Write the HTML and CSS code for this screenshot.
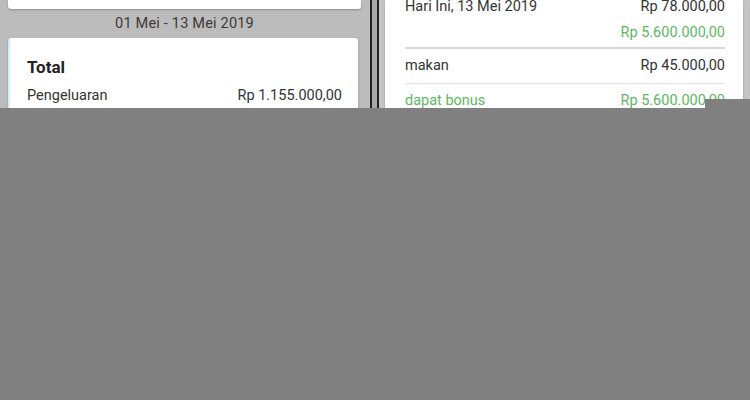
FILE: index.html
```html
<!DOCTYPE html>
<html lang="id">
<head>
  <meta charset="UTF-8" />
  <title>Catatan Keuangan</title>
  <link rel="stylesheet" href="styles.css">
</head>
<body>
  <div class="shot">
    <div class="phones">
      <div class="phone left">
        <div class="card top-card"></div>
        <div class="range">01 Mei - 13 Mei 2019</div>
        <div class="card total">
          <div class="total-title">Total</div>
          <div class="row">
            <span>Pengeluaran</span>
            <span>Rp 1.155.000,00</span>
          </div>
        </div>
      </div>
      <div class="divider"></div>
      <div class="phone right">
        <div class="card list">
          <div class="day">
            <div class="row">
              <span>Hari Ini, 13 Mei 2019</span>
              <span>Rp 78.000,00</span>
            </div>
            <div class="row end green">
              <span>Rp 5.600.000,00</span>
            </div>
          </div>
          <div class="row item">
            <span>makan</span>
            <span>Rp 45.000,00</span>
          </div>
          <div class="row item green">
            <span>dapat bonus</span>
            <span>Rp 5.600.000,00</span>
          </div>
        </div>
      </div>
    </div>
    <div class="corner"></div>
  </div>
</body>
</html>
```

FILE: styles.css
```css
* { box-sizing: border-box; }
body {
  margin: 0;
  background: #808080;
  font-family: Roboto, 'Noto Sans', sans-serif;
  color: #333;
}
.shot {
  position: relative;
  width: 750px;
  height: 400px;
}
.phones {
  display: flex;
  height: 108px;
  overflow: hidden;
}
.phone { flex: none; }
.left {
  width: 370px;
  background: #bcbcbc;
  padding: 0 9px 0 8px;
}
.right {
  width: 371px;
  background: #c4c4c4;
  padding: 0 6px 0 6px;
}
.divider {
  width: 9px;
  flex: none;
  background: #a8a8a8;
  border-left: 2px solid #222;
  border-right: 2px solid #222;
}
.card {
  background: #fff;
  box-shadow: 0 1px 2px rgba(0, 0, 0, 0.25);
}
.top-card {
  height: 9px;
  border-radius: 0 0 3px 3px;
}
.range {
  height: 29px;
  line-height: 29px;
  text-align: center;
  font-size: 14.5px;
  letter-spacing: 0.2px;
  color: #3a3a3a;
}
.total {
  margin-right: 3px;
  padding: 19px 16px 0 17px;
  height: 90px;
  border-left: 2px solid #cfeef5;
  border-radius: 3px 3px 0 0;
}
.total-title {
  font-weight: bold;
  font-size: 17px;
  color: #222;
  line-height: 20px;
  margin-bottom: 10px;
}
.row {
  display: flex;
  justify-content: space-between;
  font-size: 14.5px;
  line-height: 18px;
}
.row.end { justify-content: flex-end; }
.green { color: #5cb85c; }
.list {
  height: 120px;
  padding: 0 18px 0 20px;
  margin-right: 1px;
}
.day {
  padding-bottom: 5px;
  border-bottom: 2px solid #d6d6d6;
}
.day .row:first-child { line-height: 14px; }
.day .row + .row { margin-top: 10px; }
.item {
  height: 35px;
  align-items: center;
  border-bottom: 1px solid #e4e4e4;
}
.item.green {
  height: 33px;
  border-bottom: none;
}
.corner {
  position: absolute;
  left: 705px;
  top: 99px;
  width: 45px;
  height: 10px;
  background: #808080;
}
```
